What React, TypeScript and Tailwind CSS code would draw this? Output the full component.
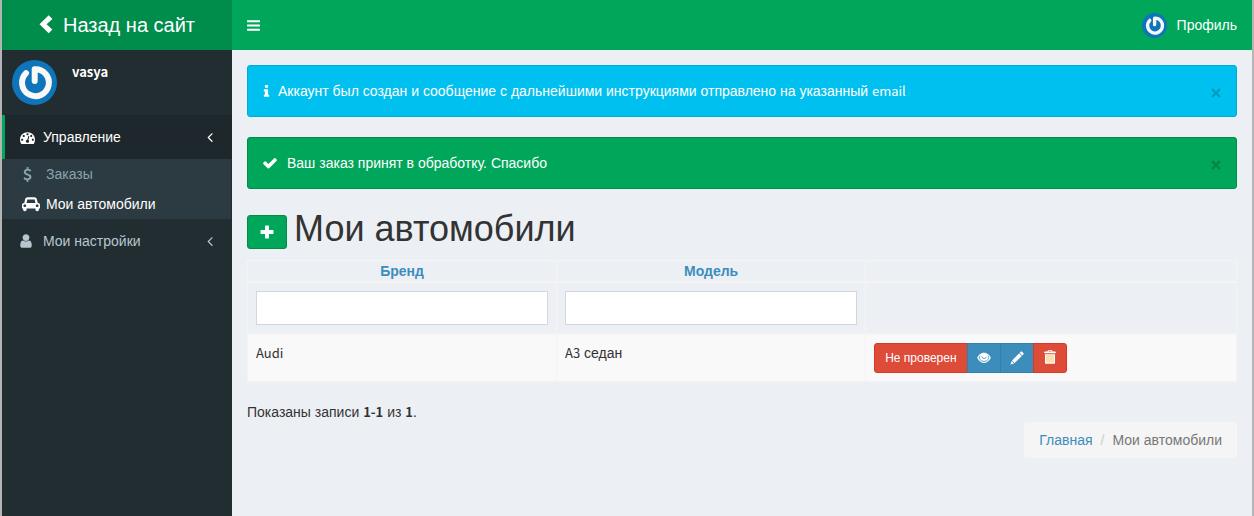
import React from "react";

type Drawing = { className?: string };

const Fa = ({ d, box = "0 0 1792 1792", className = "" }: { d: string; box?: string; className?: string }) => (
  <svg viewBox={box} className={"shrink-0 fill-current " + className} aria-hidden="true">
    <path d={d} />
  </svg>
);

const BARS =
  "M1664 1344v128q0 26-19 45t-45 19h-1408q-26 0-45-19t-19-45v-128q0-26 19-45t45-19h1408q26 0 45 19t19 45zm0-512v128q0 26-19 45t-45 19h-1408q-26 0-45-19t-19-45v-128q0-26 19-45t45-19h1408q26 0 45 19t19 45zm0-512v128q0 26-19 45t-45 19h-1408q-26 0-45-19t-19-45v-128q0-26 19-45t45-19h1408q26 0 45 19t19 45z";
const INFO =
  "M1216 1344v128q0 26-19 45t-45 19h-512q-26 0-45-19t-19-45v-128q0-26 19-45t45-19h64v-384h-64q-26 0-45-19t-19-45v-128q0-26 19-45t45-19h384q26 0 45 19t19 45v576h64q26 0 45 19t19 45zm-128-1152v192q0 26-19 45t-45 19h-256q-26 0-45-19t-19-45v-192q0-26 19-45t45-19h256q26 0 45 19t19 45z";
const CHECK =
  "M1671 566q0 40-28 68l-724 724-136 136q-28 28-68 28t-68-28l-136-136-362-362q-28-28-28-68t28-68l136-136q28-28 68-28t68 28l294 295 656-657q28-28 68-28t68 28l136 136q28 28 28 68z";
const ANGLE_LEFT =
  "M1203 544q0 13-10 23l-393 393 393 393q10 10 10 23t-10 23l-50 50q-10 10-23 10t-23-10l-466-466q-10-10-10-23t10-23l466-466q10-10 23-10t23 10l50 50q10 10 10 23z";
const USER =
  "M1536 1399q0 109-62.5 187t-150.5 78h-854q-88 0-150.5-78t-62.5-187q0-85 8.5-160.5t31.5-152 58.5-131 94-89 134.5-34.5q131 128 313 128t313-128q76 0 134.5 34.5t94 89 58.5 131 31.5 152 8.5 160.5zm-256-887q0 159-112.5 271.5t-271.5 112.5-271.5-112.5-112.5-271.5 112.5-271.5 271.5-112.5 271.5 112.5 112.5 271.5z";
const DASHBOARD =
  "M384 1152q0-53-37.5-90.5t-90.5-37.5-90.5 37.5-37.5 90.5 37.5 90.5 90.5 37.5 90.5-37.5 37.5-90.5zm192-448q0-53-37.5-90.5t-90.5-37.5-90.5 37.5-37.5 90.5 37.5 90.5 90.5 37.5 90.5-37.5 37.5-90.5zm428 481l101-382q6-26-7.5-48.5t-38.5-29.5-48 6.500-30 39.500l-101 382q-60 5-107 43.500t-63 98.500q-20 77 20 146t117 89 146-20 89-117q16-60-6-117t-72-91zm660-33q0-53-37.500-90.500t-90.500-37.500-90.500 37.500-37.500 90.500 37.500 90.500 90.500 37.500 90.500-37.500 37.500-90.500zm-640-640q0-53-37.500-90.500t-90.500-37.500-90.500 37.500-37.500 90.500 37.500 90.500 90.500 37.500 90.500-37.500 37.500-90.500zm448 192q0-53-37.500-90.500t-90.500-37.500-90.500 37.500-37.500 90.500 37.500 90.500 90.500 37.500 90.500-37.500 37.500-90.500zm320 448q0 261-141 483-19 29-54 29h-1402q-35 0-54-29-141-221-141-483 0-182 71-348t191-286 286-191 348-71 348 71 286 191 191 286 71 348z";
const CAR =
  "M480 1088q0-66-47-113t-113-47-113 47-47 113 47 113 113 47 113-47 47-113zm36-320h1016l-89-357q-2-8-14-17.500t-21-9.500h-768q-9 0-21 9.500t-14 17.500zm1372 320q0-66-47-113t-113-47-113 47-47 113 47 113 113 47 113-47 47-113zm160-96v384q0 14-9 23t-23 9h-96v128q0 80-56 136t-136 56-136-56-56-136v-128h-1024v128q0 80-56 136t-136 56-136-56-56-136v-128h-96q-14 0-23-9t-9-23v-384q0-93 65.500-158.500t158.500-65.500h28l105-419q23-94 104-157.500t179-63.500h768q98 0 179 63.500t104 157.500l105 419h28q93 0 158.500 65.500t65.500 158.500z";
const DOLLAR =
  "M1362 1185q0 153-99.5 263.5t-258.5 136.5v175q0 14-9 23t-23 9h-135q-13 0-22.5-9.5t-9.5-22.5v-175q-66-9-127.5-31t-101.5-44.5-74-48-46.5-37.5-17.5-18q-17-21-2-41l103-135q7-10 23-12 15-2 24 9l2 2q113 99 243 125 37 8 74 8 81 0 142.5-43t61.5-122q0-28-15-53t-33.5-42-58.5-37.5-66-32-80-32.5q-39-16-61.5-25t-61.5-26.5-62.5-31-56.5-35.5-53.5-42.5-43.5-49-35.5-58-21-66.5-8.5-78q0-138 98-242t255-134v-180q0-13 9.5-22.5t22.5-9.5h135q14 0 23 9t9 23v176q57 6 110.5 23t87 33.5 63.5 37.5 39 29 15 14q17 18 5 38l-81 146q-8 15-23 16-14 3-27-7-3-3-14.5-12t-39-26.5-58.5-32-74.5-26-85.5-11.5q-95 0-155 43t-60 111q0 26 8.5 48t29.5 41.5 39.5 33 56 31 60.5 27 70 27.5q53 20 81 31.5t76 35 75.5 42.5 62 50 53 63.5 31.5 76.5 13 94z";

const ChevronLeft = ({ className = "" }: Drawing) => (
  <svg viewBox="0 0 14 20" className={"shrink-0 fill-current " + className} aria-hidden="true">
    <path d="M9.700 0.300 L13.400 4 L7.600 9.300 L13.400 14.600 L9.700 18.300 L0.500 9.300 Z" />
  </svg>
);

const Plus = ({ className = "" }: Drawing) => (
  <svg viewBox="0 0 14 14" className={"shrink-0 fill-current " + className} aria-hidden="true">
    <path d="M5.600 .5h2.800q.6 0 .6.6V5h3.900q.6 0 .6.6v2.800q0 .6-.6.6H9v3.900q0 .6-.6.6H5.600q-.6 0-.6-.6V9H1.100q-.6 0-.6-.6V5.600q0-.6.6-.6H5V1.100q0-.6.6-.6z" />
  </svg>
);

const Eye = ({ className = "" }: Drawing) => (
  <svg viewBox="0 0 14 12" className={"shrink-0 " + className} aria-hidden="true">
    <path d="M7 .8C10.300.8 12.700 3.300 13.800 5.800 12.700 8.600 10.300 10.900 7 10.900S1.300 8.600.2 5.800C1.300 3.300 3.700.8 7 .8z" className="fill-current" />
    <path d="M3 3.700C1 6.800 3.800 9.300 7 9.300s6-2.500 4-5.600" fill="none" stroke="#3c8dbc" strokeWidth=".8" />
    <path d="M4.800 4.300q.2 2.200 2.200 2.200t2.300-1.600" fill="none" stroke="#3c8dbc" strokeWidth=".8" />
  </svg>
);

const Pencil = ({ className = "" }: Drawing) => (
  <svg viewBox="0 0 14 14" className={"shrink-0 fill-current " + className} aria-hidden="true">
    <path d="M10.900 .6q.5-.4 1 0l1.600 1.600q.4.500 0 1l-1.200 1.200-2.600-2.600zM9.200 2.300l2.600 2.600-7.200 7.200-2.600-2.600zM1.600 10l2.500 2.500-3.600 1.100z" />
  </svg>
);

const Trash = ({ className = "" }: Drawing) => (
  <svg viewBox="0 0 12 14" className={"shrink-0 " + className} aria-hidden="true">
    <path className="fill-current" fillRule="evenodd" d="M3.500 1.500Q3.500.2 4.500.2h3q1 0 1 1.300H11q.8 0 .8.8V3.200H.2v-.9q0-.8.8-.8zM4.700 1.500h2.600v-.4H4.700zM1 4.200h10v8.900q0 .7-.7.7H1.700q-.7 0-.7-.7z" />
    <path d="M3 5v7.500M5 5v7.500M7 5v7.500M9 5v7.500" stroke="#f0ad3c" strokeWidth=".8" />
  </svg>
);

const Avatar = ({ className = "" }: Drawing) => (
  <svg viewBox="0 0 45 45" className={"shrink-0 " + className} role="img" aria-label="vasya">
    <circle cx="22.500" cy="22.500" r="22.500" fill="#0f75bb" />
    <path d="M14 13.200A13.400 13.400 0 1 0 22.700 9.300V21" fill="none" stroke="#f8f8f6" strokeWidth="6" strokeLinecap="round" strokeLinejoin="round" />
  </svg>
);

const Alert = ({ tone, icon, children }: { tone: string; icon: React.ReactNode; children: React.ReactNode }) => (
  <div role="alert" className={"mb-5 flex h-13 items-center rounded-[3px] border px-[14px] text-white " + tone}>
    {icon}
    <p className="flex-1">{children}</p>
    <button type="button" aria-label="Закрыть" className="flex h-5 w-3 items-center justify-center opacity-20">
      <svg viewBox="0 0 10 10" className="mt-1 size-[10px]" aria-hidden="true">
        <path d="M1 1l8 8M9 1l-8 8" stroke="#000" strokeWidth="2" />
      </svg>
    </button>
  </div>
);

const LATIN = "font-['Noto_Sans_CJK_SC',sans-serif] text-[13px]";

export default function App() {
  return (
    <div className="flex min-h-screen border-x-2 border-[#b5b5b5] bg-[#ecf0f5] font-['Liberation_Sans',Arial,sans-serif] text-sm leading-5 text-[#333]">
      <aside className="flex w-[230px] shrink-0 flex-col bg-[#222d32]">
        <a href="#site" className="flex h-[50px] items-center justify-center bg-[#008d4c] text-xl text-white">
          <ChevronLeft className="mr-[10px] h-5 w-[14px]" />
          Назад на сайт
        </a>
        <div className="flex h-[65px] gap-[15px] p-[10px]">
          <Avatar className="size-[45px]" />
          <p className={"pt-[2px] leading-5 font-bold text-white " + LATIN}>vasya</p>
        </div>
        <nav>
          <a href="#manage" className="flex h-11 items-center border-l-3 border-[#00a65a] bg-[#1e282c] pr-[14px] pl-[15px] text-white">
            <Fa d={DASHBOARD} className="size-[15px]" />
            <span className="ml-2 flex-1">Управление</span>
            <Fa d={ANGLE_LEFT} className="size-4" />
          </a>
          <div className="mr-px bg-[#2c3b41] pl-5">
            <a href="#orders" className="flex h-[30px] items-center text-[#8aa4af]">
              <Fa d={DOLLAR} className="-ml-[2px] mr-[11px] size-[15px]" />
              Заказы
            </a>
            <a href="#cars" className="flex h-[30px] items-center text-white">
              <Fa d={CAR} box="0 0 2048 1792" className="mr-[6px] h-4 w-[18px]" />
              Мои автомобили
            </a>
          </div>
          <a href="#settings" className="flex h-11 items-center pr-[14px] pl-4 text-[#b8c7ce]">
            <Fa d={USER} className="mr-[9px] size-4" />
            <span className="flex-1">Мои настройки</span>
            <Fa d={ANGLE_LEFT} className="size-4" />
          </a>
        </nav>
      </aside>

      <div className="flex min-w-0 flex-1 flex-col">
        <header className="flex h-[50px] items-center justify-between bg-[#00a65a] px-[15px] text-white">
          <button type="button" aria-label="Меню">
            <Fa d={BARS} className="-ml-px size-[15px]" />
          </button>
          <a href="#profile" className="flex items-center gap-[10px]">
            <Avatar className="size-[25px]" />
            Профиль
          </a>
        </header>

        <main className="p-[15px]">
          <Alert tone="border-[#00acd6] bg-[#00c0ef]" icon={<Fa d={INFO} className="-ml-[3px] mr-1 size-[15px]" />}>
            Аккаунт был создан и сообщение с дальнейшими инструкциями отправлено на указанный <span className={LATIN}>email</span>
          </Alert>
          <Alert tone="border-[#008d4c] bg-[#00a65a]" icon={<Fa d={CHECK} className="mr-[9px] size-4" />}>
            Ваш заказ принят в обработку. Спасибо
          </Alert>

          <h1 className="mb-[11px] flex h-10 items-end gap-[7px] text-4xl leading-10">
            <button type="button" aria-label="Добавить" className="flex h-[34px] w-10 items-center justify-center rounded-[3px] border border-[#008d4c] bg-[#00a65a] text-white">
              <Plus className="size-[14px]" />
            </button>
            Мои автомобили
          </h1>

          <table className="w-full table-fixed border-collapse border border-[#f4f4f4]">
            <colgroup>
              <col className="w-[31.25%]" />
              <col className="w-[31.25%]" />
              <col />
            </colgroup>
            <thead>
              <tr className="h-[21px]">
                <th className="border border-[#f4f4f4] p-0">
                  <a href="#brand" className="block text-[#3c8dbc]">Бренд</a>
                </th>
                <th className="border border-[#f4f4f4] p-0">
                  <a href="#model" className="block text-[#3c8dbc]">Модель</a>
                </th>
                <td className="border border-[#f4f4f4]" />
              </tr>
              <tr className="border-t-2 border-[#f4f4f4]">
                <td className="border-r border-[#f4f4f4] p-2">
                  <input type="text" aria-label="Бренд" className="block h-[34px] w-full border border-[#d2d6de] bg-white px-3" />
                </td>
                <td className="border-r border-[#f4f4f4] p-2">
                  <input type="text" aria-label="Модель" className="block h-[34px] w-full border border-[#d2d6de] bg-white px-3" />
                </td>
                <td />
              </tr>
            </thead>
            <tbody>
              <tr className="border-t-2 border-[#f4f4f4] bg-[#f9f9f9] align-top">
                <td className={"border-r border-[#f4f4f4] p-2 " + LATIN}>Audi</td>
                <td className="border-r border-[#f4f4f4] p-2">
                  <span className={LATIN}>A3</span> седан
                </td>
                <td className="p-2">
                  <div className="flex h-[30px] text-xs text-white">
                    <button type="button" className="rounded-l-[3px] border border-[#d73925] bg-[#dd4b39] px-[10px]">
                      Не проверен
                    </button>
                    <button type="button" aria-label="Просмотр" className="-ml-px flex w-[34px] items-center justify-center border border-[#367fa9] bg-[#3c8dbc] pb-px">
                      <Eye className="h-3 w-[14px]" />
                    </button>
                    <button type="button" aria-label="Изменить" className="-ml-px flex w-[34px] items-center justify-center border border-[#367fa9] bg-[#3c8dbc] pb-px">
                      <Pencil className="size-[14px]" />
                    </button>
                    <button type="button" aria-label="Удалить" className="-ml-px flex w-[34px] items-center justify-center rounded-r-[3px] border border-[#d73925] bg-[#dd4b39] pb-[2px]">
                      <Trash className="h-[14px] w-3" />
                    </button>
                  </div>
                </td>
              </tr>
            </tbody>
          </table>

          <p className="mt-5">
            Показаны записи <b className={LATIN}>1-1</b> из <b className={LATIN}>1</b>.
          </p>

          <nav aria-label="Путь" className="ml-auto flex h-9 w-fit items-center rounded-[3px] bg-[#f5f5f5] px-[15px]">
            <a href="#home" className="text-[#3c8dbc]">Главная</a>
            <span className="px-2 text-[#ccc]">/</span>
            <span className="text-[#777]">Мои автомобили</span>
          </nav>
        </main>
      </div>
    </div>
  );
}
